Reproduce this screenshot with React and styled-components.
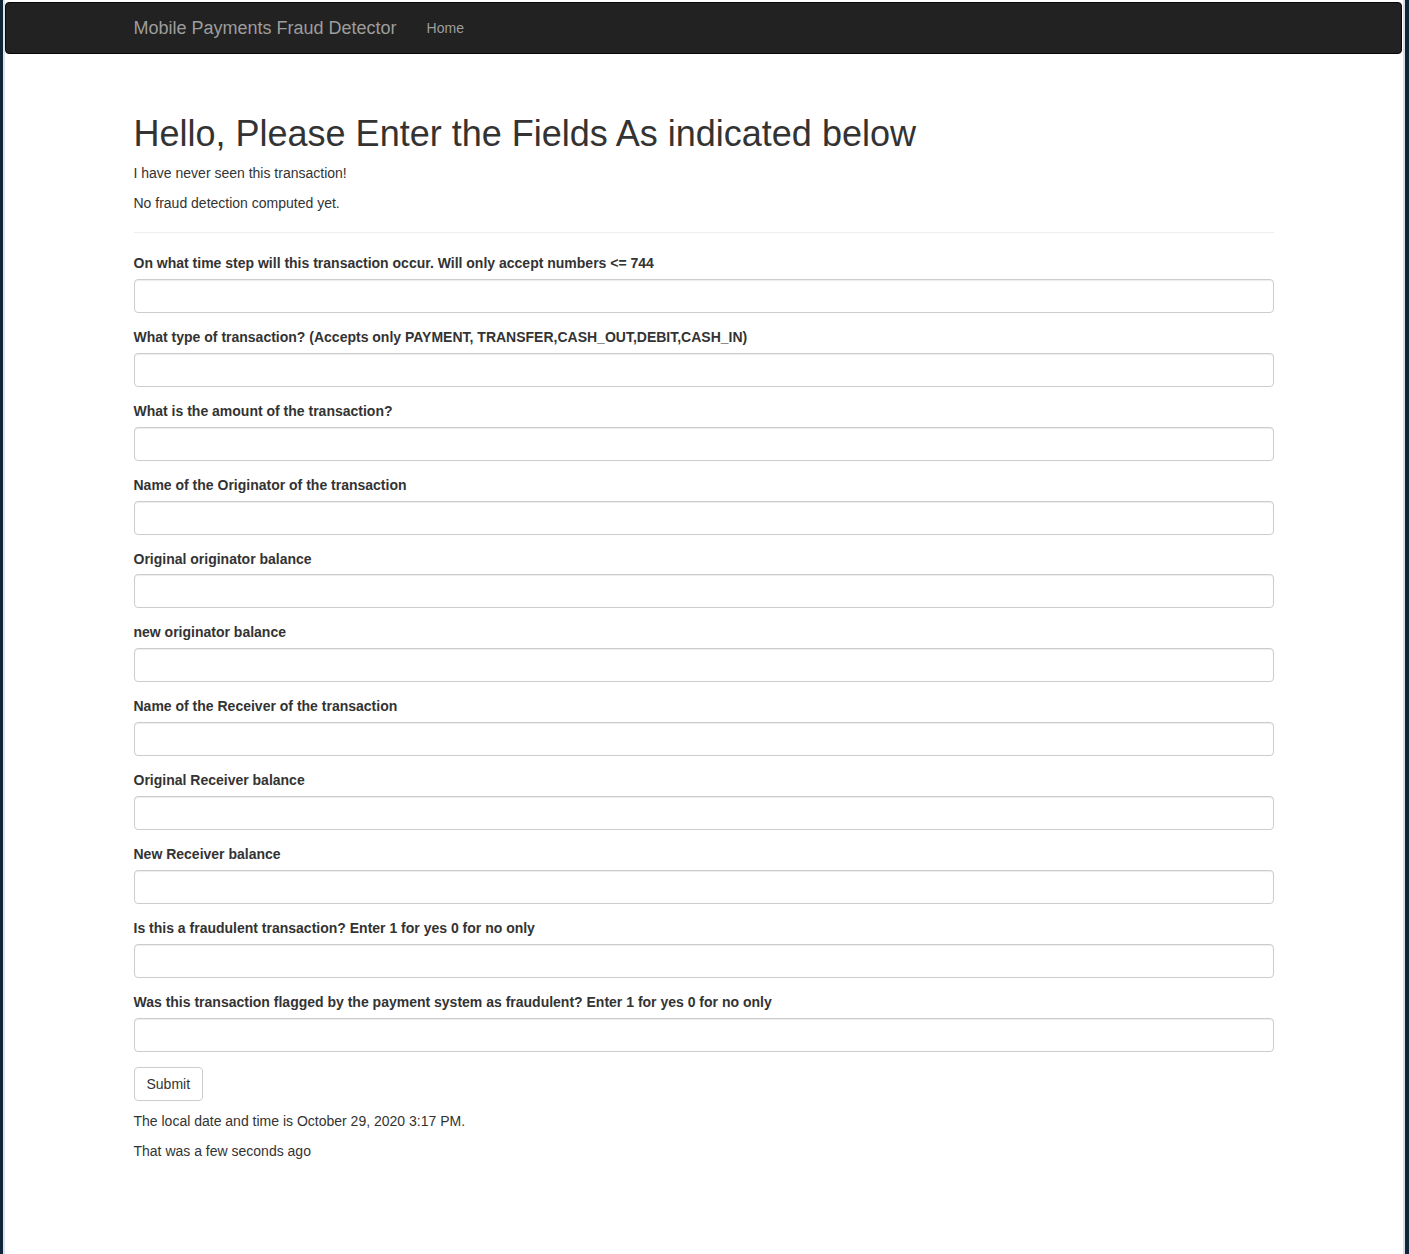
import React from "react";
import styled, { createGlobalStyle } from "styled-components";

const Global = createGlobalStyle`
  html, body { margin: 0; padding: 0; }
  body {
    background: #10243a;
    font-family: "Liberation Sans", Arial, Helvetica, sans-serif;
    font-size: 14px;
    line-height: 1.42857;
    color: #333;
  }
  * { box-sizing: border-box; }
`;

const Frame = styled.div`
  margin: 0 4px 0 3px;
  min-height: 1254px;
  background: #fff;
  border-left: 2px solid #dfe3e8;
  border-right: 2px solid #d9dde3;
  padding-top: 2px;
  padding-right: 1px;
`;

const Navbar = styled.nav`
  height: 52px;
  background: #222;
  border: 1px solid #080808;
  border-radius: 4px;
  margin-bottom: 20px;
`;

const Container = styled.div`
  width: 1170px;
  margin: 0 auto;
  padding: 0 15px;
`;

const NavInner = styled(Container)`
  display: flex;
  align-items: center;
  height: 50px;
`;

const Brand = styled.a`
  font-size: 18px;
  line-height: 20px;
  color: #9d9d9d;
  text-decoration: none;
  padding: 15px 15px 15px 0;
`;

const NavLink = styled.a`
  font-size: 14px;
  line-height: 20px;
  color: #9d9d9d;
  text-decoration: none;
  padding: 15px;
`;

const Main = styled(Container)`
  padding-top: 20px;
`;

const Title = styled.h1`
  font-size: 36px;
  font-weight: 500;
  line-height: 1.1;
  margin: 20px 0 10px;
  color: #333;
`;

const Para = styled.p`
  margin: 0 0 10px;
`;

const Rule = styled.hr`
  margin: 18px 0 21px;
  border: 0;
  border-top: 1px solid #eee;
`;

const FormGroup = styled.div`
  margin-bottom: 15px;
`;

const Label = styled.label`
  display: inline-block;
  font-weight: 700;
  margin-bottom: 5px;
  max-width: 100%;
`;

const Input = styled.input`
  display: block;
  width: 100%;
  height: 34px;
  padding: 6px 12px;
  font-size: 14px;
  font-family: inherit;
  color: #555;
  background: #fff;
  border: 1px solid #ccc;
  border-radius: 4px;
  box-shadow: inset 0 1px 1px rgba(0, 0, 0, 0.075);
  outline: none;
`;

const Button = styled.button`
  display: inline-block;
  padding: 6px 12px;
  font-size: 14px;
  line-height: 20px;
  font-family: inherit;
  color: #333;
  background: #fff;
  border: 1px solid #ccc;
  border-radius: 4px;
  margin-bottom: 11px;
  cursor: pointer;
`;

const fields = [
  "On what time step will this transaction occur. Will only accept numbers <= 744",
  "What type of transaction? (Accepts only PAYMENT, TRANSFER,CASH_OUT,DEBIT,CASH_IN)",
  "What is the amount of the transaction?",
  "Name of the Originator of the transaction",
  "Original originator balance",
  "new originator balance",
  "Name of the Receiver of the transaction",
  "Original Receiver balance",
  "New Receiver balance",
  "Is this a fraudulent transaction? Enter 1 for yes 0 for no only",
  "Was this transaction flagged by the payment system as fraudulent? Enter 1 for yes 0 for no only",
];

export default function App() {
  return (
    <>
      <Global />
      <Frame>
        <Navbar>
          <NavInner>
            <Brand href="#">Mobile Payments Fraud Detector</Brand>
            <NavLink href="#">Home</NavLink>
          </NavInner>
        </Navbar>
        <Main>
          <Title>Hello, Please Enter the Fields As indicated below</Title>
          <Para>I have never seen this transaction!</Para>
          <Para>No fraud detection computed yet.</Para>
          <Rule />
          <form onSubmit={(e) => e.preventDefault()}>
            {fields.map((f, i) => (
              <FormGroup key={i}>
                <Label htmlFor={`f${i}`}>{f}</Label>
                <Input id={`f${i}`} type="text" />
              </FormGroup>
            ))}
            <Button type="submit">Submit</Button>
          </form>
          <Para>The local date and time is October 29, 2020 3:17 PM.</Para>
          <Para>That was a few seconds ago</Para>
        </Main>
      </Frame>
    </>
  );
}
